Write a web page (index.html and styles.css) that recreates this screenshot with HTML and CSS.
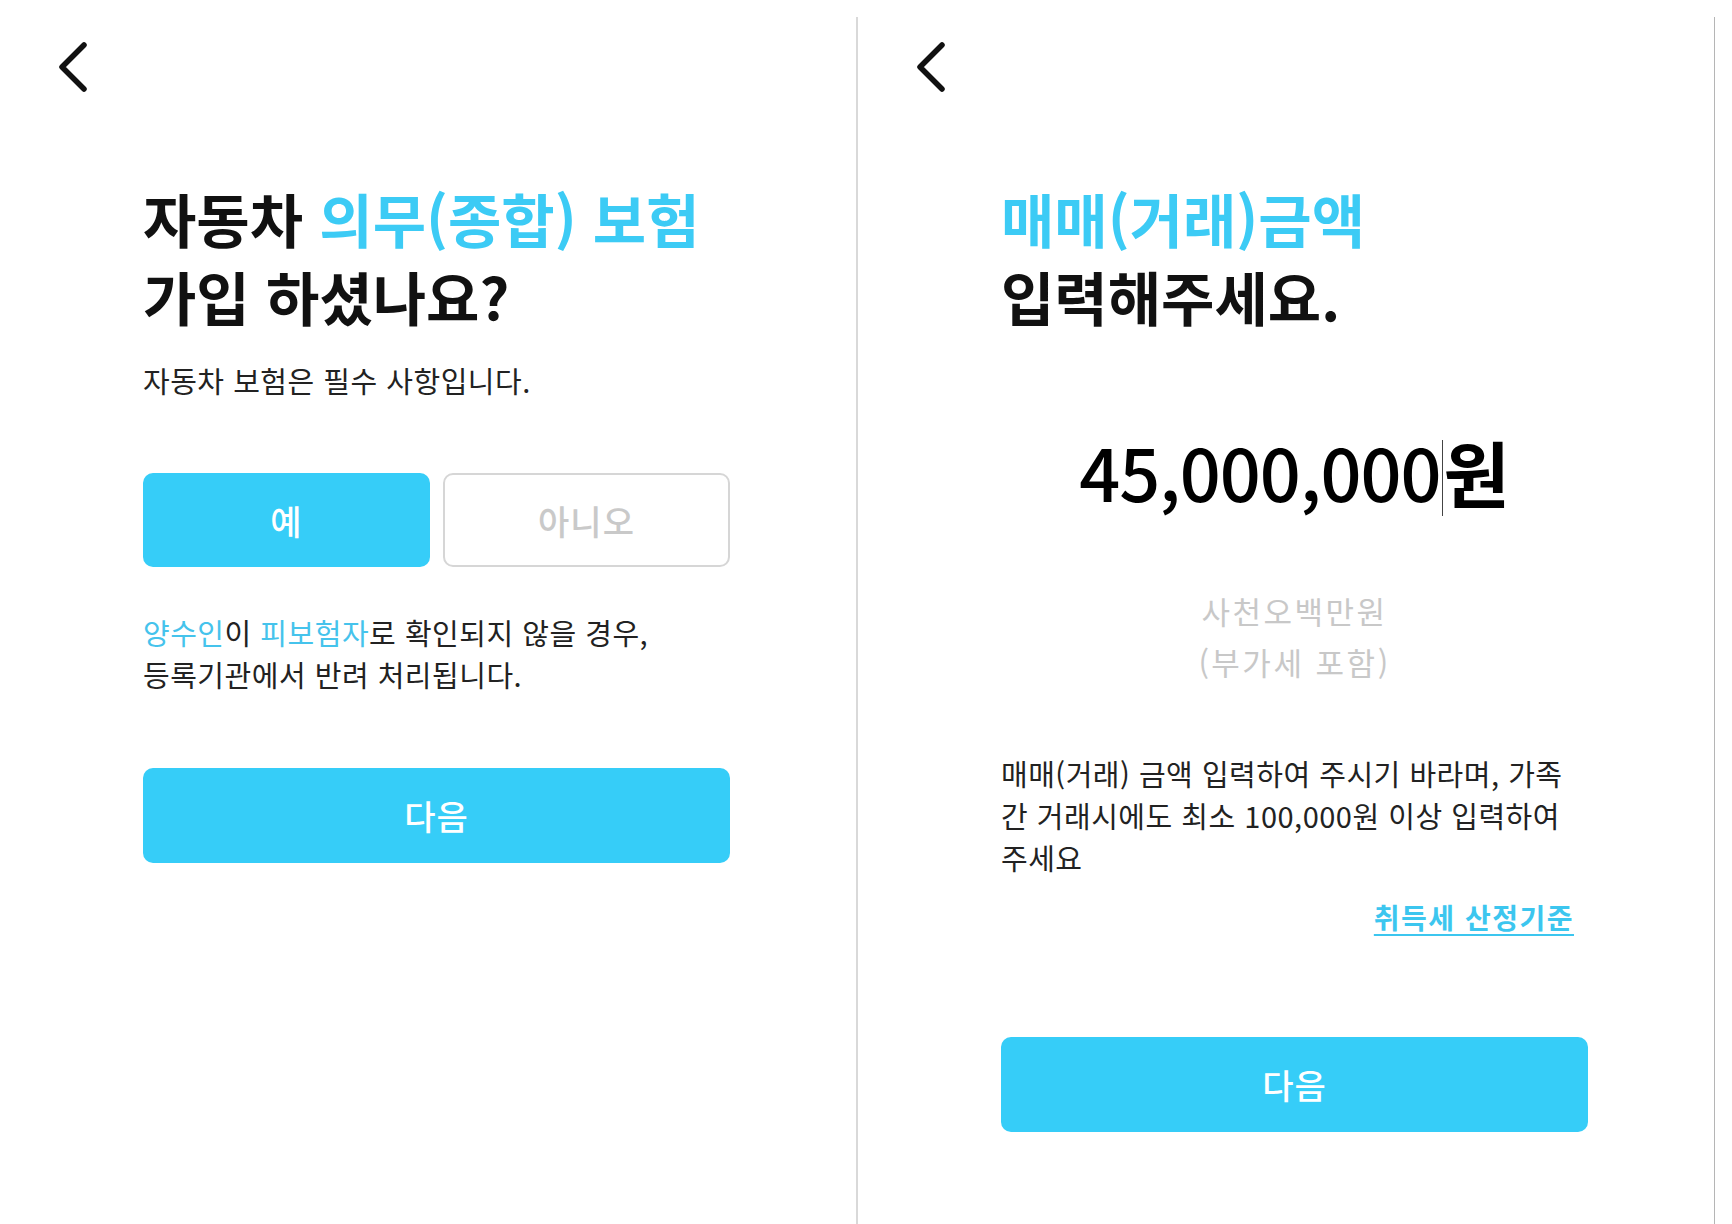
FILE: index.html
```html
<!DOCTYPE html>
<html lang="ko">
<head>
<meta charset="utf-8">
<title>자동차 이전 등록</title>
<link rel="stylesheet" href="styles.css">
</head>
<body>
<div class="screens">
  <section class="screen screen-left">
    <div class="topbar">
      <svg class="back" viewBox="0 0 34 54" width="34" height="54" aria-hidden="true"><path d="M28 5 L6 27 L28 49" fill="none" stroke="#111" stroke-width="5.5" stroke-linecap="round" stroke-linejoin="round"/></svg>
    </div>
    <div class="content">
      <h1 class="title">자동차 <span class="accent">의무(종합) 보험</span><br>가입 하셨나요?</h1>
      <p class="subtitle">자동차 보험은 필수 사항입니다.</p>
      <div class="choices">
        <button class="choice choice-on">예</button>
        <button class="choice choice-off">아니오</button>
      </div>
      <p class="note"><span class="hl">양수인</span>이 <span class="hl">피보험자</span>로 확인되지 않을 경우,<br>등록기관에서 반려 처리됩니다.</p>
      <button class="next next-left">다음</button>
    </div>
  </section>
  <section class="screen screen-right">
    <div class="topbar">
      <svg class="back" viewBox="0 0 34 54" width="34" height="54" aria-hidden="true"><path d="M28 5 L6 27 L28 49" fill="none" stroke="#111" stroke-width="5.5" stroke-linecap="round" stroke-linejoin="round"/></svg>
    </div>
    <div class="content">
      <h1 class="title"><span class="accent">매매(거래)금액</span><br>입력해주세요.</h1>
      <div class="amount"><span class="digits">45,000,000</span><span class="caret"></span><span class="won">원</span></div>
      <p class="amount-words">사천오백만원<br>(부가세 포함)</p>
      <p class="desc">매매(거래) 금액 입력하여 주시기 바라며, 가족<br>간 거래시에도 최소 100,000원 이상 입력하여<br>주세요</p>
      <div class="link-row"><a class="link" href="#">취득세 산정기준</a></div>
      <button class="next next-right">다음</button>
    </div>
  </section>
</div>
</body>
</html>
```

FILE: styles.css
```css
* { box-sizing: border-box; }

html, body {
  margin: 0;
  padding: 0;
  background: #ffffff;
}

body {
  font-family: "Noto Sans CJK KR", "Noto Sans", sans-serif;
  color: #111111;
  width: 1732px;
  height: 1224px;
  overflow: hidden;
}

.screens {
  display: flex;
  padding-top: 17px;
  height: 1224px;
}

.screen {
  display: flex;
  flex-direction: column;
  height: 100%;
}

.screen-left {
  width: 858px;
  border-right: 2px solid #d9d9d9;
}

.screen-right {
  width: 857px;
  border-right: 1px solid #b5b5b5;
}

.topbar {
  height: 100px;
  padding: 23px 0 0 56px;
}

.back { display: block; }

.content {
  padding-left: 143px;
  width: 730px;
  display: flex;
  flex-direction: column;
}

.title {
  margin: 62px 0 0;
  font-size: 58px;
  line-height: 78px;
  font-weight: 700;
  letter-spacing: 0;
  color: #111111;
}

.accent { color: #3ccbf5; }

.subtitle {
  margin: 23px 0 0;
  font-size: 29px;
  line-height: 44px;
  font-weight: 400;
  letter-spacing: 0.5px;
  color: #222222;
}

.choices {
  margin-top: 71px;
  display: grid;
  grid-template-columns: 1fr 1fr;
  column-gap: 13px;
}

.choice {
  height: 94px;
  border-radius: 10px;
  font-family: inherit;
  font-size: 34px;
  font-weight: 500;
  letter-spacing: 1px;
  padding: 0;
}

.choice-on {
  background: #36cdf8;
  border: none;
  color: #ffffff;
}

.choice-off {
  background: #ffffff;
  border: 2px solid #d6d6d6;
  color: #c9c9c9;
}

.note {
  margin: 44px 0 0;
  font-size: 29px;
  line-height: 42px;
  letter-spacing: 0.5px;
  color: #222222;
}

.hl { color: #45c3ec; }

.next {
  height: 95px;
  width: 587px;
  border: none;
  border-radius: 10px;
  background: #36cdf8;
  color: #ffffff;
  font-family: inherit;
  font-size: 34px;
  font-weight: 500;
  letter-spacing: 1px;
  padding: 0;
}

.next-left { margin-top: 73px; }

.amount {
  margin-top: 96px;
  width: 587px;
  text-align: center;
  font-size: 72px;
  line-height: 80px;
  height: 80px;
  color: #000000;
  white-space: nowrap;
}

.digits {
  font-weight: 500;
  letter-spacing: -1px;
}

.caret {
  display: inline-block;
  width: 1px;
  height: 76px;
  background: #444444;
  vertical-align: -14px;
  margin: 0 1px;
}

.won { font-weight: 700; }

.amount-words {
  margin: 74px 0 0;
  width: 587px;
  text-align: center;
  font-size: 31px;
  line-height: 51px;
  letter-spacing: 2.5px;
  color: #c8c8c8;
}

.desc {
  margin: 65px 0 0;
  font-size: 29px;
  line-height: 42px;
  letter-spacing: 0.5px;
  color: #222222;
  white-space: nowrap;
}

.link-row {
  margin-top: 18px;
  width: 587px;
  text-align: right;
  padding-right: 14px;
  line-height: 42px;
}

.link {
  font-size: 28px;
  font-weight: 700;
  letter-spacing: 1.5px;
  color: #3cc6ef;
  text-decoration: underline;
  text-underline-offset: 5px;
  text-decoration-thickness: 2px;
}

.next-right { margin-top: 94px; }
```
